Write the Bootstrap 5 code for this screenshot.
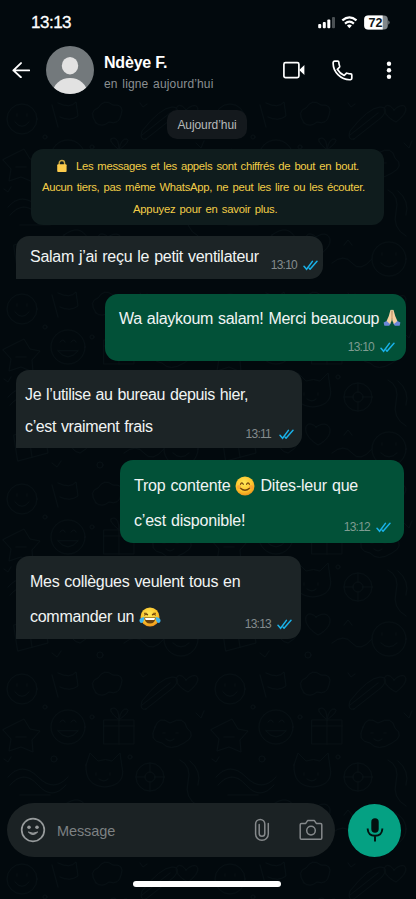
<!DOCTYPE html>
<html lang="fr" data-bs-theme="dark">
<head>
<meta charset="utf-8">
<meta name="viewport" content="width=device-width, initial-scale=1">
<title>Ndèye F.</title>
<link href="https://cdn.jsdelivr.net/npm/bootstrap@5.3.0/dist/css/bootstrap.min.css" rel="stylesheet">
<style>
html,body{height:899px;overflow:hidden}
body{background:#02090d;font-family:"Liberation Sans",Arial,sans-serif;color:#f1f4f4}
svg{display:block;flex:none}
.phone{width:416px;height:899px;isolation:isolate}
.doodles{position:absolute;left:0;top:95px;z-index:-1}
.status{height:45px;padding:10px 26px 0 31px}
.clock{font-size:17px;line-height:26px;letter-spacing:-.5px;-webkit-text-stroke:.3px #fff}
.topbar{height:50px;padding:0 24px 0 12px}
.who{margin-left:10px;width:179px}
.who-name{font-size:16px;line-height:20px;font-weight:700;letter-spacing:-.2px;margin-top:7px}
.who-seen{font-size:12px;line-height:20px;color:#8b8f91;letter-spacing:.15px;word-spacing:1.2px;margin-top:1px}
.day{width:80px;height:29px;margin:15px 0 0 167px;border-radius:10px;background:#14191d;color:#b6b9ba;font-size:12px;letter-spacing:-.08px}
.notice{width:353px;height:76px;margin:10px 0 0 31px;border-radius:12px;background:#0f1c1d;color:#f2cd47;font-size:11.3px;padding-top:7px}
.notice div{word-spacing:1.3px;white-space:nowrap}
.n1{height:21px;line-height:21px;padding-left:25px;letter-spacing:-.32px}
.n2{height:21px;line-height:21px;padding-left:11px;letter-spacing:-.29px}
.n3{height:23px;line-height:23px;padding-left:102px;letter-spacing:-.23px}
.bubble{border-radius:13px;font-size:16px;letter-spacing:-.28px;word-spacing:.8px;white-space:nowrap}
.in{background:#1c2426;border-bottom-left-radius:0;margin-left:16px}
.out{background:#025138;}
.stamp{font-size:12px;line-height:14px;letter-spacing:-.75px;color:#848b8d;gap:6px}
.out .stamp{color:#7f9c91}
.b1{width:307px;height:43px;margin-top:11px;padding:0 5px 7px 14px}
.b1 .say{line-height:41px;height:36px}
.b2{width:301px;height:67px;margin:15px 0 0 105px;padding:0 5px 8px 14px}
.b2 .say{line-height:49px;height:46px}
.b3{width:286px;height:78px;margin-top:9px;padding:9px 8px 7px 9px;letter-spacing:-.37px}
.b3 .say{line-height:32px}
.b4{width:284px;height:83px;margin:12px 0 0 120px;padding:8px 13px 9px 14px;letter-spacing:-.2px}
.b4 .say{line-height:35px;height:66px}
.b5{width:285px;height:83px;margin-top:13px;padding:8px 9px 8px 14px}
.b5 .say{line-height:35px;height:67px}
.emo{display:inline-block;vertical-align:-5px}
.composer{margin-top:164px;padding-left:7px;height:54px;gap:13px}
.field{width:328px;height:54px;border-radius:27px;background:#1b2224;color:#7d8183;padding:0 12px 0 13px;font-size:14.5px}
.placeholder-label{margin:3px 0 0 11px;letter-spacing:-.1px}
.mic{width:53px;height:53px;background:#05a183}
.home{width:148px;height:6px;border-radius:3px;background:#fff;margin:24px 0 0 133px}
</style>
</head>
<body>
<main class="phone position-relative d-flex flex-column">
<svg class="doodles" width="416" height="804" fill="none" stroke="#071014" stroke-width="1" stroke-linecap="round" aria-hidden="true">
<defs><pattern id="doodle" width="208" height="190" patternUnits="userSpaceOnUse">
<circle cx="22" cy="24" r="15"/><path d="M15 27q7 9 14 0M17 19v2M27 19v2"/>
<path d="M52 10l6 22M58 8q12 6 18-1l2 14q-8 6-18 1"/>
<path d="M96 28q-8-12 2-15 6-10 15-3 12-1 8 10-2 10-12 7-7 6-13 1z"/>
<path d="M142 40l28-22M146 44l28-22q8-10-2-10-12 1-30 24-3 10 4 8z"/>
<path d="M186 15c-8-12-18 2 2 12 17-12 9-23-2-12z"/>
<circle cx="68" cy="62" r="17"/><path d="M60 57q3-4 5 0M71 57q3-4 5 0M58 66q10 12 20 0z"/>
<path d="M12 60l12-6 6 10 10 2-8 9 1 12-12-5-12 4 2-12-8-9zM16 72h10"/>
<path d="M104 55h30v24h-30zM104 61h30M119 55v24M119 55q-14-12-5-12 5 1 5 12 2-12 8-11 4 2-8 11"/>
<path d="M155 62q4-12 15-4 14-8 17 5 10 8-3 15-14 9-22 0-14-2-7-16zM163 68h2M176 68h2M166 74q4 4 8 0"/>
<path d="M8 112q14-16 30 0t30 0M10 120q14-16 28 0t28 0M20 130h30"/>
<path d="M86 100l4-12 8 8q8-3 14 0l8-8 2 14q4 18-17 20-20-1-19-22zM96 108v2M110 108v2M99 114q5 4 9 0"/>
<circle cx="150" cy="112" r="14"/><circle cx="150" cy="112" r="5"/><path d="M150 98v9M164 112h-9M150 126v-9M136 112h9"/>
<path d="M180 95q12 6 8 22t10 24M190 96q12 10 8 24"/>
<path d="M14 150l30-8 4 26-30 8zM18 158l28-8M28 146l4 26"/>
<path d="M64 140q16-12 24 4t-8 24q-10-2-8-12-12-6-8-16zM72 148l4 4M82 148l-3 4"/>
<path d="M108 142c-10-10-18 6 2 18 20-10 12-28-2-18zM124 168q12-10 20 0t20-4"/>
<circle cx="181" cy="164" r="17"/><path d="M174 158v2M188 158v2M173 168q8 8 16 0"/>
<circle cx="45" cy="42" r="2"/><circle cx="92" cy="52" r="2"/><circle cx="130" cy="92" r="2"/><circle cx="100" cy="180" r="3"/><circle cx="54" cy="94" r="3"/><path d="M140 8l3 4 4-3M4 94l4 3 3-5M52 178l5 4 4-6M136 150l4-5 4 5M196 48l5 5 3-7"/>
</pattern></defs><rect width="416" height="804" fill="url(#doodle)" stroke="none"/></svg>

<div class="status d-flex justify-content-between">
  <div class="clock text-white">13:13</div>
  <svg width="74" height="26" viewBox="318 10 74 26" role="img" aria-label="Réseau, Wi-Fi, batterie 72">
    <g fill="#fff"><rect x="320.2" y="24" width="3" height="4.3" rx="1"/><rect x="324.8" y="22" width="3" height="6.3" rx="1"/><rect x="329.3" y="19.5" width="3" height="8.8" rx="1"/></g><rect x="334" y="17" width="3" height="11.3" rx="1" fill="#4a5053"/>
    <g fill="none" stroke="#fff" stroke-width="2.2"><path d="M344.3 20.4q7.2-6.2 14.2 0M347 23.6q4.4-3.8 8.9 0"/></g><path d="M348.9 25.6q2.5-2 5 0l-2.5 2.7z" fill="#fff"/>
    <rect x="366.2" y="15.5" width="23.6" height="14" rx="4" fill="#81878a"/><path d="M370.2 15.5H384.7v14H370.2a4 4 0 0 1-4-4v-6a4 4 0 0 1 4-4z" fill="#fff"/><path d="M390.3 20.3q2.6 2.2 0 4.5z" fill="#81878a"/>
    <text x="370.5" y="27" font-size="12.5" font-weight="700" textLength="14" fill="#10171a">72</text>
  </svg>
</div>

<header class="topbar d-flex align-items-center">
  <svg width="18" height="16" viewBox="0 0 18 16" fill="none" stroke="#fff" stroke-width="1.9" stroke-linecap="round" stroke-linejoin="round"><path d="M17.2 8.4H1.4M9 1.1L1.4 8.4 8.9 15.2"/></svg>
  <svg class="ms-3" width="48" height="48" viewBox="0 0 48 48"><defs><clipPath id="face"><circle cx="24" cy="24" r="24"/></clipPath></defs><g clip-path="url(#face)"><path fill="#73797c" d="M0 0h48v48H0z"/><ellipse cx="24" cy="19.7" rx="8.2" ry="8.7" fill="#e2e2e2"/><ellipse cx="24" cy="47" rx="17.2" ry="15" fill="#e2e2e2"/></g></svg>
  <div class="who text-nowrap"><div class="who-name text-white">Ndèye F.</div><div class="who-seen">en ligne aujourd’hui</div></div>
  <svg width="22" height="18" viewBox="0 0 22 18" fill="none" stroke="#fff" stroke-width="1.7"><rect x=".9" y="1.6" width="15" height="15" rx="1.6"/><path d="M16.2 9.1l5.2-5v10z" fill="#fff" stroke="none"/></svg>
  <svg style="margin-left:27px" width="21" height="21" viewBox="0 0 21 21" fill="none" stroke="#fff" stroke-width="1.7" stroke-linejoin="round"><path d="M1.2 2.3Q1.5 1.2 2.7 1.2H5.8Q6.7 1.2 6.8 2.1 6.9 4.2 7.6 6 7.9 6.8 7.3 7.4L5.3 9.3Q7.9 13.7 12.2 15.5L14 13.6Q14.5 13 15.3 13.3 17 13.8 18.8 13.9 19.8 14 19.8 15V18.3Q19.8 19.6 18.6 19.7C9.5 20.3.5 12 1.2 2.3z"/></svg>
  <svg style="margin-left:33px" width="6" height="20" viewBox="0 0 6 20" fill="#fff"><circle cx="3" cy="3.8" r="2.2"/><circle cx="3" cy="10.3" r="2.2"/><circle cx="3" cy="16.8" r="2.2"/></svg>
</header>

<div class="day d-flex align-items-center justify-content-center">Aujourd’hui</div>
<section class="notice">
  <div class="n1 d-flex align-items-center"><svg class="me-2" width="12" height="15" viewBox="0 0 12 15"><path d="M3.2 6V4.2a2.7 2.7 0 0 1 5.4 0V6" fill="none" stroke="#c8a642" stroke-width="1.4"/><rect x="1.2" y="5.3" width="9.4" height="7.6" rx="1" fill="#fbcb4c"/></svg><span>Les messages et les appels sont chiffrés de bout en bout.</span></div>
  <div class="n2">Aucun tiers, pas même WhatsApp, ne peut les lire ou les écouter.</div>
  <div class="n3">Appuyez pour en savoir plus.</div>
</section>

<svg width="0" height="0" class="position-absolute"><defs>
<g id="ticks" fill="none" stroke="#19b1e8" stroke-width="1.5" stroke-linecap="round"><path d="M1 6.2l2.6 3.1L9.4 1.4M7 9.2L14 1.3M6.3 8.3l.8.9"/></g>
<radialGradient id="sun" cx=".45" cy=".35" r=".65"><stop offset="0" stop-color="#ffe95a"/><stop offset=".65" stop-color="#fcc52c"/><stop offset="1" stop-color="#ee941c"/></radialGradient></defs></svg>

<div class="bubble in b1 d-flex justify-content-between align-items-end"><div class="say align-self-start">Salam j’ai reçu le petit ventilateur</div><div class="stamp d-flex align-items-center">13:10<svg width="15" height="11"><use href="#ticks"/></svg></div></div>

<div class="bubble out b2 d-flex flex-column"><div class="say d-flex"><span>Wa alaykoum salam! Merci beaucoup</span>
<svg class="ms-auto" style="margin-top:15px" width="18" height="18" viewBox="0 0 18 18"><path d="M.6 13.6l4-2 3.2 2.9-1.6 2.3H1.4zM17.4 13.6l-4-2-3.2 2.9 1.6 2.3h4.8z" fill="#6d87d8"/><path d="M8.9 1Q7.4.3 7.1 2.2L5.8 7 3.6 12l3.4 2.9Q9 12.4 9 9zM9.1 1q1.5-.7 1.8 1.2L12.2 7l2.2 5-3.4 2.9Q9 12.4 9 9z" fill="#f3cfa0"/><path d="M9 2v8" stroke="#b47d50" stroke-width=".7"/></svg></div>
<div class="stamp d-flex align-items-center mt-auto align-self-end me-2">13:10<svg style="margin-right:-2px" width="15" height="11"><use href="#ticks"/></svg></div></div>

<div class="bubble in b3 d-flex justify-content-between align-items-end"><div class="say align-self-start">Je l’utilise au bureau depuis hier,<br>c’est vraiment frais</div><div class="stamp d-flex align-items-center" style="margin-left:-12px">13:11<svg style="margin-left:2px" width="15" height="11"><use href="#ticks"/></svg></div></div>

<div class="bubble out b4 d-flex justify-content-between align-items-end"><div class="say align-self-start">Trop contente <svg class="emo" width="20" height="20" viewBox="0 0 20 20"><circle cx="10" cy="10" r="9.5" fill="url(#sun)"/><g fill="none" stroke="#70420c" stroke-width="1.3" stroke-linecap="round"><path d="M5.5 8.2q1.3-2.6 2.8 0M11.6 8.2q1.4-2.6 2.8 0M5.5 12.3q4.5 4 9 0"/></g><g fill="#f4823a" opacity=".45"><circle cx="4" cy="11" r="2"/><circle cx="16" cy="11" r="2"/></g></svg> Dites-leur que<br>c’est disponible!</div><div class="stamp d-flex align-items-center" style="margin-left:-25px">13:12<svg width="15" height="11"><use href="#ticks"/></svg></div></div>

<div class="bubble in b5 d-flex justify-content-between align-items-end"><div class="say align-self-start">Mes collègues veulent tous en<br>commander un <svg class="emo" width="22" height="20" viewBox="0 0 22 20"><circle cx="11" cy="10" r="9.5" fill="url(#sun)"/><path d="M5.2 10.5h11.6q-.7 6-5.8 6t-5.8-6z" fill="#69410f"/><path d="M6 11h10l-.6 2H6.6z" fill="#fff"/><path d="M5 6.3q3-1 4 1.7-2-1.2-4 .2M17 6.3q-3-1-4 1.7 2-1.2 4 .2" fill="none" stroke="#70420c" stroke-width="1"/><path d="M5.3 10Q.3 10.7.4 14q1 3 3.6 1.2Q5.3 14 5.3 10zM16.7 10q5 .7 4.9 4-1 3-3.6 1.2-1.3-1.2-1.3-5.2z" fill="#3fb4ee"/></svg></div><div class="stamp d-flex align-items-center" style="margin-left:-12px">13:13<svg width="15" height="11"><use href="#ticks"/></svg></div></div>

<div class="composer d-flex align-items-center">
  <div class="field d-flex align-items-center">
    <svg width="26" height="26" viewBox="0 0 26 26" fill="none" stroke="#979b9c"><circle cx="13" cy="13" r="11.3" stroke-width="1.7"/><g fill="#979b9c" stroke="none"><circle cx="9" cy="10.2" r="1.8"/><circle cx="17" cy="10.2" r="1.8"/></g><path d="M8.3 15q4.7 5 9.4 0-4.7 2.4-9.4 0z" fill="#979b9c" stroke-linejoin="round"/></svg>
    <span class="placeholder-label">Message</span>
    <svg class="ms-auto" width="16" height="24" viewBox="0 0 16 24" fill="none" stroke="#85898b" stroke-width="1.5" stroke-linecap="round"><path d="M14.3 5.5V16a6.3 6.3 0 0 1-12.7 0V6a4.6 4.6 0 0 1 9.2 0v9.5a2.8 2.8 0 0 1-5.6 0V6.5"/></svg>
    <svg style="margin-left:29px" width="24" height="22" viewBox="0 0 24 22" fill="none" stroke="#85898b" stroke-width="1.5" stroke-linejoin="round"><path d="M2.5 4.4h4.2L8.6 1.6h6.8l1.9 2.8h4.2q1.3 0 1.3 1.3v13.2q0 1.3-1.3 1.3h-19q-1.3 0-1.3-1.3V5.7q0-1.3 1.3-1.3z"/><circle cx="12" cy="11.6" r="4.3"/></svg>
  </div>
  <div class="mic rounded-circle d-flex align-items-center justify-content-center"><svg width="18" height="26" viewBox="0 0 18 26"><rect x="5.3" y="1.2" width="7.4" height="14.5" rx="3.7" fill="#03110f"/><path d="M1.7 11.5v.8q.5 6.5 7.3 6.5t7.3-6.5v-.8M9 18.8v5.7" fill="none" stroke="#03110f" stroke-width="1.9"/></svg></div>
</div>
<div class="home"></div>
</main>
<script src="https://cdn.jsdelivr.net/npm/bootstrap@5.3.0/dist/js/bootstrap.bundle.min.js"></script>
</body>
</html>
